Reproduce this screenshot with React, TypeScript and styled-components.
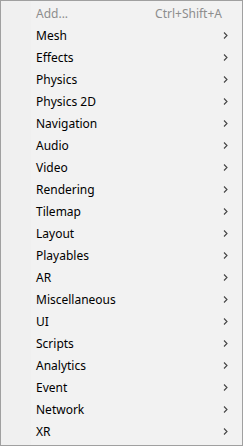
import styled, { createGlobalStyle } from 'styled-components';

const GlobalStyle = createGlobalStyle`
	html, body {
		margin: 0;
		padding: 0;
		background: #ffffff;
	}
`;

const Menu = styled.div`
	box-sizing: border-box;
	width: 243px;
	height: 446px;
	border: 1px solid #a0a0a0;
	background: linear-gradient(to right, #f0f0f0 0, #f0f0f0 30px, #f2f2f2 30px);
	padding: 1px 1px 3px 1px;
	font-family: "Noto Sans", "Liberation Sans", sans-serif;
	font-size: 12px;
`;

const Row = styled.div<{ $disabled?: boolean }>`
	display: flex;
	align-items: center;
	height: 22px;
	padding: 0 12px 0 34px;
	color: ${(p) => (p.$disabled ? '#8d8d8d' : '#000000')};
`;

const Label = styled.span`
	flex: 1;
	white-space: nowrap;
`;

const Shortcut = styled.span`
	color: #8d8d8d;
	padding-right: 7px;
`;

const Chevron = styled.svg`
	width: 5px;
	height: 7px;
	margin-right: 1px;
`;

const items = [
	'Mesh',
	'Effects',
	'Physics',
	'Physics 2D',
	'Navigation',
	'Audio',
	'Video',
	'Rendering',
	'Tilemap',
	'Layout',
	'Playables',
	'AR',
	'Miscellaneous',
	'UI',
	'Scripts',
	'Analytics',
	'Event',
	'Network',
	'XR'
];

const App = () => {
	return (
		<>
			<GlobalStyle />
			<Menu>
				<Row $disabled>
					<Label>Add...</Label>
					<Shortcut>Ctrl+Shift+A</Shortcut>
				</Row>
				{items.map((item) => (
					<Row key={item}>
						<Label>{item}</Label>
						<Chevron viewBox="0 0 5 7">
							<path d="M1 0.5 L4 3.5 L1 6.5" fill="none" stroke="#444" strokeWidth="1.1" />
						</Chevron>
					</Row>
				))}
			</Menu>
		</>
	);
};

export default App;
